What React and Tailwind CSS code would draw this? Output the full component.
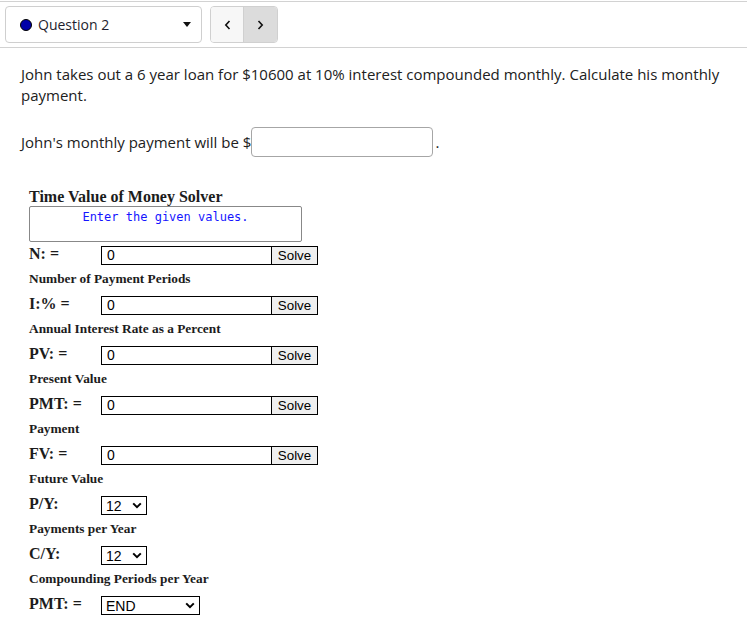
import React from "react";

const rows = [
  { k: "N: =", d: "Number of Payment Periods" },
  { k: "I:% =", d: "Annual Interest Rate as a Percent" },
  { k: "PV: =", d: "Present Value" },
  { k: "PMT: =", d: "Payment" },
  { k: "FV: =", d: "Future Value" },
];

const selects = [
  { k: "P/Y:", v: "12", d: "Payments per Year", w: "w-[46px]" },
  { k: "C/Y:", v: "12", d: "Compounding Periods per Year", w: "w-[46px]" },
  { k: "PMT: =", v: "END", d: null, w: "w-[99px]" },
];

function Chevron() {
  return (
    <svg width="10" height="7" viewBox="0 0 10 7" className="shrink-0">
      <path d="M1.2 1.4 L5 5.2 L8.8 1.4" fill="none" stroke="#000" strokeWidth="2" />
    </svg>
  );
}

export default function App() {
  return (
    <div className="min-h-[622px] bg-white font-['Open_Sans',sans-serif] text-[#212121]">
      {/* header */}
      <div className="mt-px flex items-center border-y border-[#d2d2d2] px-[5px] py-[4px]">
        <div className="flex h-[37px] w-[197px] items-center rounded-[4px] border border-[#cfcfcf] bg-white pl-[14px] pr-[10px]">
          <span className="h-[12px] w-[12px] rounded-full border border-black bg-[#0000a8]" />
          <span className="ml-[6px] text-[14px] leading-none text-[#1e1e2e]">Question 2</span>
          <svg width="8" height="5" viewBox="0 0 8 5" className="ml-auto">
            <path d="M0 0 H8 L4 5 Z" fill="#111" />
          </svg>
        </div>
        <div className="ml-[8px] flex h-[37px] w-[68px] overflow-hidden rounded-[4px] border border-[#d0d0d0]">
          <button className="flex w-[33px] items-center justify-center border-r border-[#d0d0d0] bg-[#f7f7f7]">
            <svg width="7" height="10" viewBox="0 0 7 10">
              <path d="M5.5 1 L1.8 5 L5.5 9" fill="none" stroke="#111" strokeWidth="1.6" />
            </svg>
          </button>
          <button className="flex flex-1 items-center justify-center bg-[#dcdcdc]">
            <svg width="7" height="10" viewBox="0 0 7 10">
              <path d="M1.5 1 L5.2 5 L1.5 9" fill="none" stroke="#111" strokeWidth="1.6" />
            </svg>
          </button>
        </div>
      </div>

      {/* question */}
      <div className="px-[21px] pt-[16px]">
        <p className="text-[15px] leading-[21px]">
          John takes out a 6 year loan for $10600 at 10% interest compounded monthly. Calculate his monthly payment.
        </p>
        <div className="mt-[21px] flex items-center text-[15px] leading-[21px]">
          <span>John's monthly payment will be $</span>
          <input className="h-[30px] w-[182px] rounded-[4px] border border-[#a6a6a6] bg-white" />
          <span className="ml-[2px]">.</span>
        </div>
      </div>

      {/* solver */}
      <div className="ml-[29px] mt-[31px] font-['Liberation_Serif',serif] text-[#1c1c1c]">
        <div className="text-[16px] font-bold leading-[18px]">Time Value of Money Solver</div>
        <div className="h-[36px] w-[273px] rounded-[2px] border border-[#888] pt-[3px] text-center font-['DejaVu_Sans_Mono',monospace] text-[12px] leading-[14px] text-[#1515ff]">
          Enter the given values.
        </div>
        <div className="mt-[4px]">
          {rows.map((r) => (
            <div key={r.d}>
              <div className="flex h-[19px] items-start">
                <div className="w-[72px] text-[16px] font-bold leading-[16px]">{r.k}</div>
                <input
                  defaultValue="0"
                  className="h-[19px] w-[171px] border border-black bg-white pl-[5px] font-['Liberation_Sans',sans-serif] text-[14px] text-black"
                />
                <button className="h-[19px] w-[46px] border-y border-r border-black bg-[#efefef] font-['Liberation_Sans',sans-serif] text-[13.33px] leading-[17px] text-black">
                  Solve
                </button>
              </div>
              <div className="mb-[10px] mt-[6px] text-[13.33px] font-bold leading-[15px]">{r.d}</div>
            </div>
          ))}
          {selects.map((s) => (
            <div key={s.k + s.v + s.d}>
              <div className="flex h-[19px] items-start">
                <div className="w-[72px] text-[16px] font-bold leading-[16px]">{s.k}</div>
                <div
                  className={`flex h-[19px] items-center justify-between border border-black bg-white pl-[4px] pr-[4px] font-['Liberation_Sans',sans-serif] text-[14px] text-black ${s.w}`}
                >
                  <span className="leading-none">{s.v}</span>
                  <Chevron />
                </div>
              </div>
              {s.d && <div className="mb-[10px] mt-[6px] text-[13.33px] font-bold leading-[15px]">{s.d}</div>}
            </div>
          ))}
        </div>
      </div>
    </div>
  );
}
